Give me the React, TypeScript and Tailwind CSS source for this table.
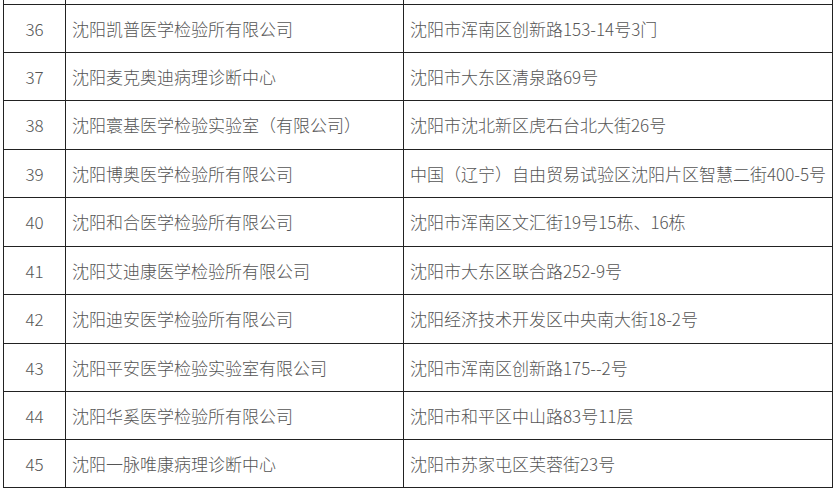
import React from 'react';

const rows = [
  { no: 36, name: '沈阳凯普医学检验所有限公司', addr: '沈阳市浑南区创新路153-14号3门', h: 'h-[48px]' },
  { no: 37, name: '沈阳麦克奥迪病理诊断中心', addr: '沈阳市大东区清泉路69号', h: 'h-[48px]' },
  { no: 38, name: '沈阳寰基医学检验实验室（有限公司）', addr: '沈阳市沈北新区虎石台北大街26号', h: 'h-[49px]' },
  { no: 39, name: '沈阳博奥医学检验所有限公司', addr: '中国（辽宁）自由贸易试验区沈阳片区智慧二街400-5号', h: 'h-[48px]' },
  { no: 40, name: '沈阳和合医学检验所有限公司', addr: '沈阳市浑南区文汇街19号15栋、16栋', h: 'h-[49px]' },
  { no: 41, name: '沈阳艾迪康医学检验所有限公司', addr: '沈阳市大东区联合路252-9号', h: 'h-[48px]' },
  { no: 42, name: '沈阳迪安医学检验所有限公司', addr: '沈阳经济技术开发区中央南大街18-2号', h: 'h-[49px]' },
  { no: 43, name: '沈阳平安医学检验实验室有限公司', addr: '沈阳市浑南区创新路175--2号', h: 'h-[48px]' },
  { no: 44, name: '沈阳华奚医学检验所有限公司', addr: '沈阳市和平区中山路83号11层', h: 'h-[48px]' },
  { no: 45, name: '沈阳一脉唯康病理诊断中心', addr: '沈阳市苏家屯区芙蓉街23号', h: 'h-[48px]' },
];

export default function App() {
  return (
    <div className="w-[838px] h-[491px] bg-white overflow-hidden font-['Noto_Sans_CJK_SC','Microsoft_YaHei',sans-serif] font-light text-[17px] text-[#555]">
      <div className="ml-[3px] w-[830px] border-l border-[#222]">
        {/* cut-off row above */}
        <div className="grid grid-cols-[62px_338px_429px] h-[5px]">
          <div className="border-r border-b border-[#222]" />
          <div className="border-r border-b border-[#222]" />
          <div className="border-r border-b border-[#222]" />
        </div>
        {rows.map(r => (
          <div key={r.no} className={`grid grid-cols-[62px_338px_429px] ${r.h}`}>
            <div className="flex items-center justify-center border-r border-b border-[#222]">{r.no}</div>
            <div className="flex items-center pl-[6px] border-r border-b border-[#222] whitespace-nowrap">{r.name}</div>
            <div className="flex items-center pl-[6px] border-r border-b border-[#222] whitespace-nowrap">{r.addr}</div>
          </div>
        ))}
      </div>
    </div>
  );
}
